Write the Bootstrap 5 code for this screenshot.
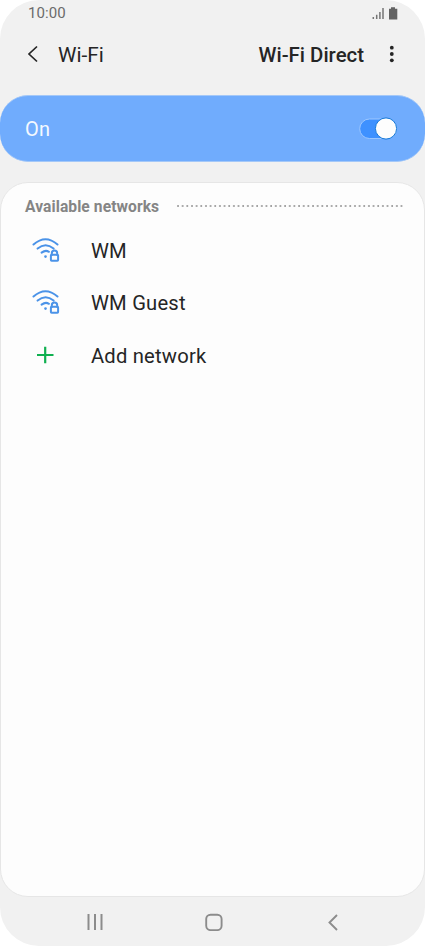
<!DOCTYPE html>
<html lang="en">
<head>
<meta charset="utf-8">
<meta name="viewport" content="width=device-width, initial-scale=1">
<title>Wi-Fi</title>
<link href="https://cdn.jsdelivr.net/npm/bootstrap@5.3.0/dist/css/bootstrap.min.css" rel="stylesheet">
<style>
body{background:#fff;font-family:Roboto,sans-serif;color:#252525}
svg{display:block;flex:none}
.phone{width:425px;height:946px;background:#f1f1f1;border-radius:39px;overflow:hidden}
.status{height:27px;padding:0 27px 0 28px;font-size:15px;line-height:27px;letter-spacing:.1px;color:#6b6b6b}
.topbar{height:68px;padding:0 29px 15px 27px;font-size:20.8px;line-height:30px}
.topbar span{padding-top:2px}
.topbar .caption-text{padding-left:19px}
.topbar .direct{font-weight:500;font-size:20.4px}
.power{height:67px;padding:0 27px 0 25px;background:#70acfd;border:1px solid #a4c8f8;border-width:1px 0;border-radius:28px;color:#f4f9ff;font-size:20px;letter-spacing:.2px}
.networks{height:715px;margin-top:20px;background:#fdfdfd;border:1px solid #e6e6e6;border-radius:28px}
.heading{height:41px;padding:5px 21px 0 24px;font-size:15.6px;font-weight:700;color:#858585;letter-spacing:.08px}
.heading span{padding-top:3px}
.dots{height:2px;margin:0 0 1px 18px;background:radial-gradient(circle at 1px 1px,#9a9a9a 0,#9a9a9a .6px,transparent 1.1px) 0 0/4.67px 2px repeat-x}
.network{height:52.3px;padding-left:31px;font-size:20.2px;letter-spacing:.2px}
.network span{padding-top:1px}
.network .add-label{padding-top:2px}
.network .mark-box{width:59px}
.navkeys{height:49px;padding:1px 87px 0 87px}
.navkeys .home{margin-right:4px}
</style>
</head>
<body>
<main class="phone d-flex flex-column">
  <div class="status d-flex justify-content-between align-items-center">
    <span>10:00</span>
    <svg width="26" height="14" viewBox="0 0 26 14"><path d="M1.3 10.5v2M4.7 8.2v4.3M7.9 5.5v7M11 1.5v11" transform="translate(0 -.5)" fill="none" stroke="#757575" stroke-width="1.5"/><path d="M17 1.7h2V.3h4v1.4h2.3v10.8H17z" fill="#636363"/></svg>
  </div>
  <header class="topbar d-flex align-items-center">
    <svg width="12" height="18" viewBox="0 0 12 18"><path d="M10 1.5 2 9l8 7.5" fill="none" stroke="#252525" stroke-width="1.7"/></svg>
    <span class="caption-text flex-grow-1">Wi-Fi</span>
    <span class="direct">Wi-Fi Direct</span>
    <svg class="ms-4" width="8" height="18" viewBox="0 0 8 18"><g fill="#252525"><circle cx="3.8" cy="2.7" r="1.9"/><circle cx="3.8" cy="9" r="1.9"/><circle cx="3.8" cy="15.3" r="1.9"/></g></svg>
  </header>
  <section class="power d-flex justify-content-between align-items-center">
    <span>On</span>
    <svg width="39" height="24" viewBox="0 0 39 24"><rect x=".7" y="2" width="37" height="19.5" rx="9.75" fill="#3e91ff" stroke="#9cc7ff"/><circle cx="27" cy="11.5" r="10.6" fill="#fdfdfd" stroke="#1779d8"/></svg>
  </section>
  <section class="networks">
    <div class="heading d-flex align-items-center"><span>Available networks</span><div class="dots flex-grow-1"></div></div>
    <div class="network d-flex align-items-center">
      <div class="mark-box"><svg width="28" height="26" viewBox="0 0 28 26"><g fill="none" stroke="#4b93e8" stroke-width="2" stroke-linecap="round"><path d="M1.5 7.5q12-10.6 24 0M5.6 11.6q8-6.6 16 0M9.6 15.6q4-3 7.3-.8"/><path d="M19.8 18v-1.8a2.7 2.7 0 0 1 5.4 0V18"/><rect x="18.9" y="17.8" width="7.2" height="6" rx=".7"/></g><circle cx="13.5" cy="19.6" r="1.3" fill="#4b93e8"/></svg></div><span>WM</span>
    </div>
    <div class="network d-flex align-items-center">
      <div class="mark-box"><svg width="28" height="26" viewBox="0 0 28 26"><g fill="none" stroke="#4b93e8" stroke-width="2" stroke-linecap="round"><path d="M1.5 7.5q12-10.6 24 0M5.6 11.6q8-6.6 16 0M9.6 15.6q4-3 7.3-.8"/><path d="M19.8 18v-1.8a2.7 2.7 0 0 1 5.4 0V18"/><rect x="18.9" y="17.8" width="7.2" height="6" rx=".7"/></g><circle cx="13.5" cy="19.6" r="1.3" fill="#4b93e8"/></svg></div><span>WM Guest</span>
    </div>
    <div class="network d-flex align-items-center">
      <div class="mark-box"><svg width="28" height="26" viewBox="0 0 28 26"><path d="M5 13h16.5M13.2 4.8v16.5" stroke="#10b050" stroke-width="2.2"/></svg></div><span class="add-label">Add network</span>
    </div>
  </section>
  <nav class="navkeys d-flex justify-content-between align-items-center">
    <svg width="16" height="18" viewBox="0 0 16 18"><path d="M1.5 1v16M8 1v16M14.5 1v16" stroke="#8c8c8c" stroke-width="2"/></svg>
    <svg class="home" width="18" height="18" viewBox="0 0 18 18"><rect x="1.2" y="1.7" width="15.4" height="15.4" rx="4.3" fill="none" stroke="#8c8c8c" stroke-width="1.9"/></svg>
    <svg width="10" height="18" viewBox="0 0 10 18"><path d="M9 2 1.5 9.5 9 17" fill="none" stroke="#8c8c8c" stroke-width="1.9"/></svg>
  </nav>
</main>
<script src="https://cdn.jsdelivr.net/npm/bootstrap@5.3.0/dist/js/bootstrap.bundle.min.js"></script>
</body>
</html>
